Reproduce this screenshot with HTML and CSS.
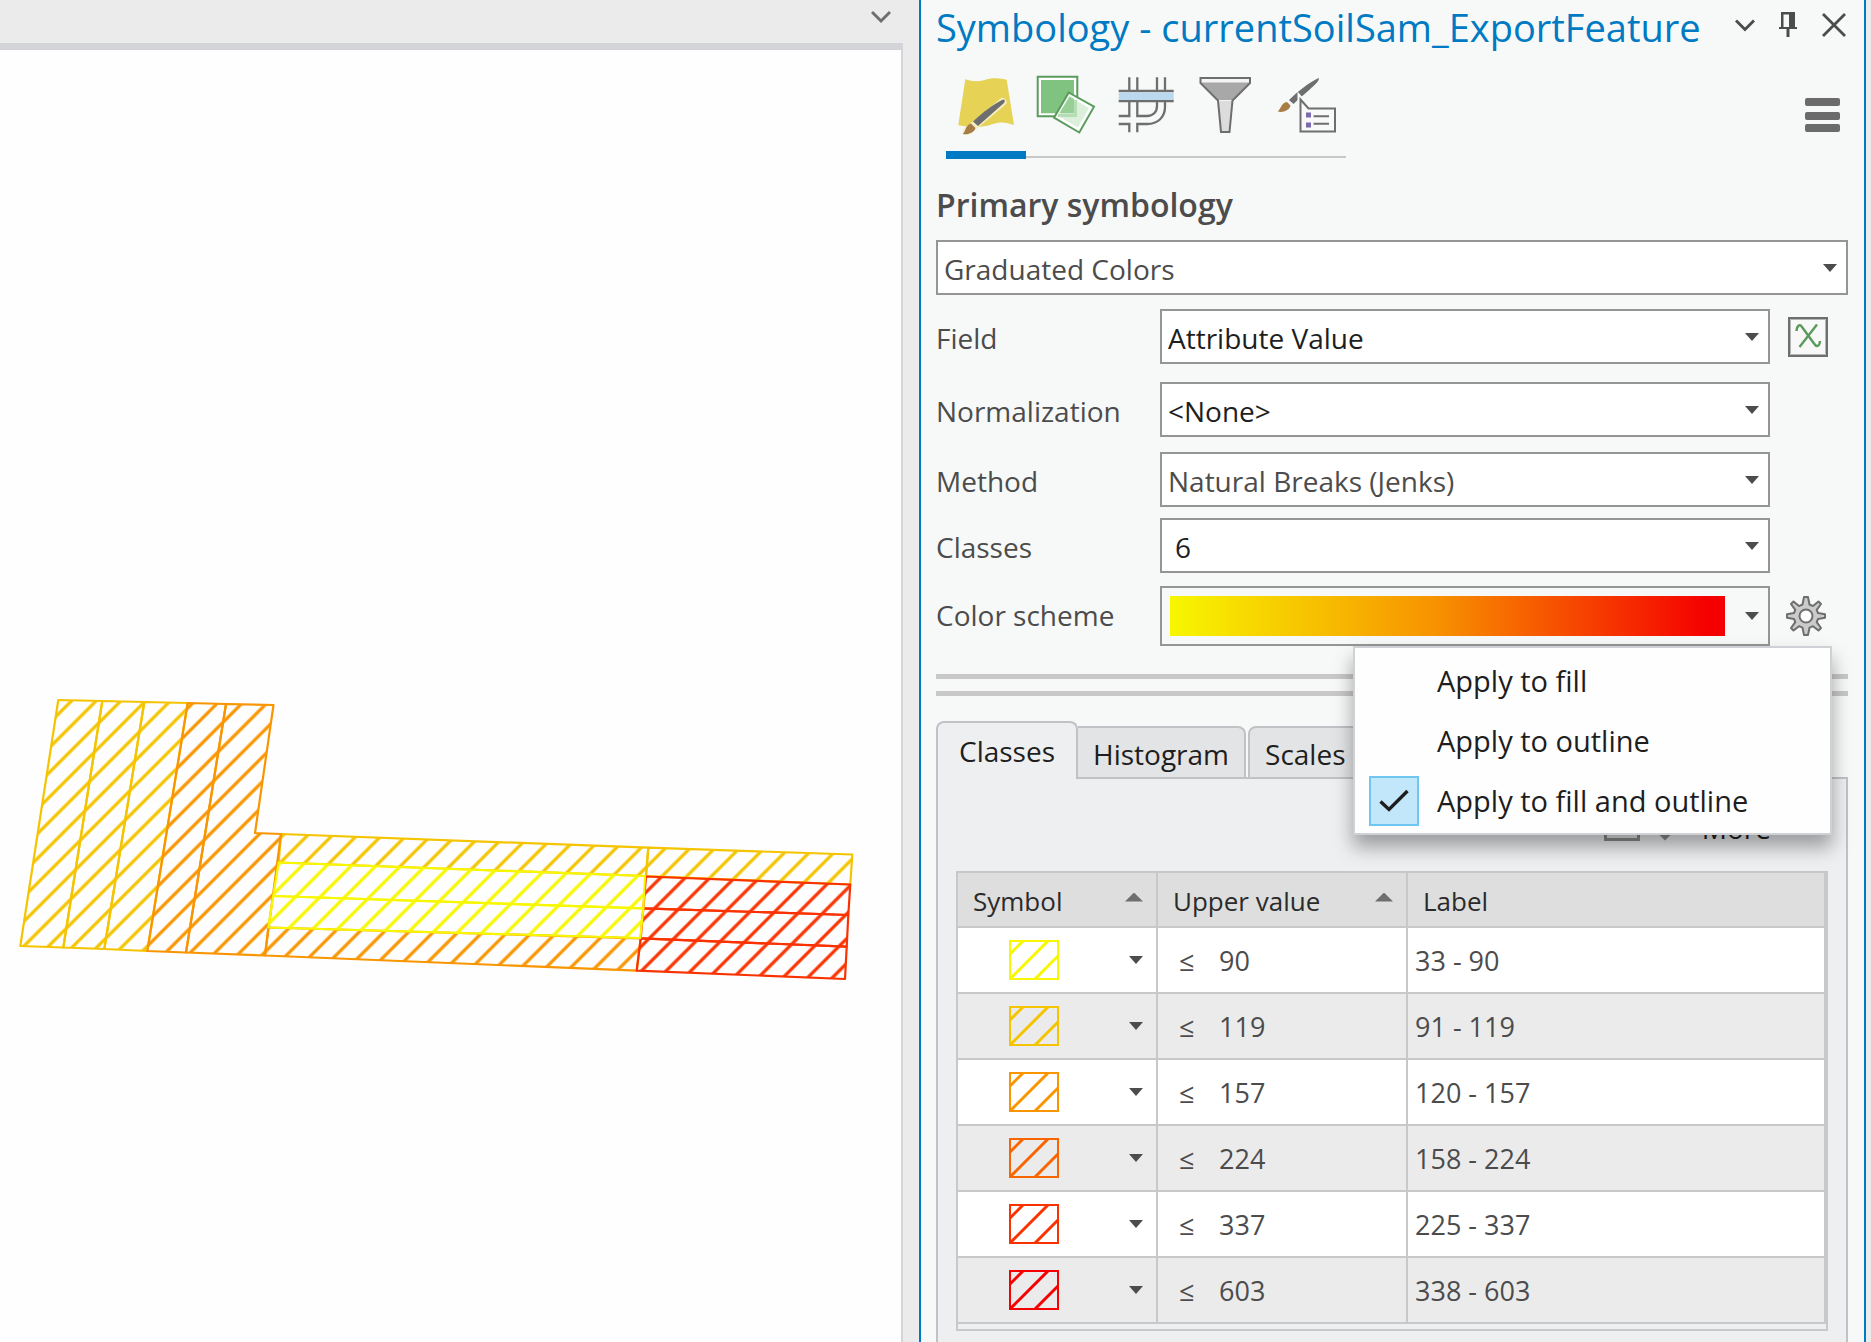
FILE: index.html
```html
<!DOCTYPE html>
<html lang="en">
<head>
<meta charset="utf-8">
<meta name="viewport" content="width=device-width, initial-scale=1">
<title>Symbology</title>
<link rel="stylesheet" href="styles.css">
</head>
<body>
<div class="app">
  <main class="view">
    <div class="view-bar">
      <button class="icon-button" type="button" aria-label="View options">
        <svg width="20" height="14" viewBox="0 0 20 14"><path d="M1 2l9 9 9-9" fill="none" stroke="#6e6e6e" stroke-width="3"/></svg>
      </button>
    </div>
    <div class="map">
      <svg class="map-drawing" viewBox="0 50 901 1292" role="img" aria-label="Field plots">
        <defs>
          <pattern id="hatch-gold" patternUnits="userSpaceOnUse" width="17.47" height="40" patternTransform="rotate(45) translate(537.4 0)"><path d="M8.73 0v40" stroke="#f5c400" stroke-width="3.2"/></pattern>
          <pattern id="hatch-orange" patternUnits="userSpaceOnUse" width="17.47" height="40" patternTransform="rotate(45) translate(537.4 0)"><path d="M8.73 0v40" stroke="#f99500" stroke-width="3.2"/></pattern>
          <pattern id="hatch-yellow" patternUnits="userSpaceOnUse" width="17.47" height="40" patternTransform="rotate(45) translate(537.4 0)"><path d="M8.73 0v40" stroke="#f7f700" stroke-width="3.2"/></pattern>
          <pattern id="hatch-red" patternUnits="userSpaceOnUse" width="17.47" height="40" patternTransform="rotate(45) translate(537.4 0)"><path d="M8.73 0v40" stroke="#fa3200" stroke-width="3.2"/></pattern>
        </defs>
        <g stroke-width="2.2" stroke-linejoin="round">
          <g fill="url(#hatch-gold)" stroke="#f5c400">
            <path d="M58.3 700L102.3 701 63.3 947.5 20.3 946z"/>
            <path d="M102.3 701L144.3 702 104.3 949 63.3 947.5z"/>
            <path d="M144.3 702L187.7 703 147.3 951 104.3 949z"/>
            <path d="M281 834L648.3 847.7 646 876 278.7 862.5z"/>
            <path d="M648.3 847.7L852.3 854.5 850.3 884.5 646 876z"/>
          </g>
          <g fill="url(#hatch-orange)" stroke="#f99500">
            <path d="M187.7 703L226 704 186 952.5 147.3 951z"/>
            <path d="M226 704L273.5 705 255 833 281 834 265 955.5 186 952.5z"/>
            <path d="M268.3 927.5L640.7 938.3 636.7 970.7 265 955.5z"/>
          </g>
          <g fill="url(#hatch-red)" stroke="#fa3200">
            <path d="M646 876.5L850.3 884.5 848.3 915 643.3 908.3z"/>
            <path d="M643.3 908.3L848.3 915 846.7 946.7 640.7 938.3z"/>
            <path d="M640.7 938.3L846.7 946.7 845 979 636.7 970.7z"/>
          </g>
          <g fill="url(#hatch-yellow)" stroke="#f7f700">
            <path d="M278.7 862.5L645 876 643.3 908.3 273.3 896z"/>
            <path d="M273.3 896L643.3 908.3 640.3 938 268.3 927.5z"/>
          </g>
        </g>
      </svg>
    </div>
  </main>

  <aside class="pane">
    <header class="pane-header">
      <h1 class="pane-title">Symbology - currentSoilSam_ExportFeature</h1>
      <div class="pane-actions">
        <button class="icon-button" type="button" aria-label="Pane options">
          <svg width="20" height="26" viewBox="0 0 20 26"><path d="M1 8.500l9 9 9-9" fill="none" stroke="#4c4c4c" stroke-width="3"/></svg>
        </button>
        <button class="icon-button" type="button" aria-label="Auto hide">
          <svg width="18" height="26" viewBox="0 0 18 26"><path d="M2 0h14v15h2v2h-7.500v8h-3v-8H0v-2h2zM4.500 2.500v12.500h5.500V2.500z" fill="#4c4c4c" fill-rule="evenodd"/></svg>
        </button>
        <button class="icon-button" type="button" aria-label="Close">
          <svg width="26" height="26" viewBox="0 0 26 26"><path d="M2 2l22 22M24 2L2 24" fill="none" stroke="#4c4c4c" stroke-width="2.800"/></svg>
        </button>
      </div>
    </header>

    <div class="toolbar">
      <nav class="modes" aria-label="Symbology modes">
        <button class="mode mode-active" type="button" aria-label="Primary symbology">
          <svg width="60" height="60" viewBox="0 0 60 60">
            <path d="M9.300 4.300C17 7 25 6.500 30 4.500 38 2 46 3.500 50.700 4.800L58 50C50 47 44 46.500 37 49 26 53 14 53 2.300 50z" fill="#e6d255"/>
            <path d="M46.500 27L19 50 11 56" fill="none" stroke="#f5eec0" stroke-width="8" stroke-linecap="round"/>
            <path d="M48 24.500C49 25.500 49 26.500 48 28L22 51 17 46.500C27 37 38 29 46 25z" fill="#6e6e6e"/>
            <path d="M15 48.500L19.500 53C18 58 12 60 6.500 59 10 57 9 50 15 48.500z" fill="#a87c46"/>
          </svg>
        </button>
        <button class="mode" type="button" aria-label="Vary symbology by attribute">
          <svg width="60" height="60" viewBox="0 0 60 60">
            <path d="M1.700 1.700h39.600v39.600H1.700z" fill="#fff" stroke="#5a9a5c" stroke-width="2"/>
            <path d="M5 5h33v33.300H5z" fill="#80c380"/>
            <path d="M32.700 17.500L58 31.700 43.300 57.500 18 42.700z" fill="#fff" fill-opacity=".9" stroke="#5a9a5c" stroke-width="2"/>
            <path d="M34 22L53 33 42 52.500 23 41.500z" fill="#dcefdb"/>
            <path d="M22 40.500L33.500 21.500 38 24V38.300H23z" fill="#97cf96"/>
            <path d="M39.500 25V40.500H22" fill="none" stroke="#b5deb4" stroke-width="3"/>
          </svg>
        </button>
        <button class="mode" type="button" aria-label="Symbol layer drawing">
          <svg width="60" height="60" viewBox="0 0 60 60" fill="none" stroke="#6e6e6e" stroke-width="2.300">
            <path d="M13.300 2.300V16M21.300 2.300V16M41 2.300V16M49 2.300V16M13.300 26V41H2.700M13.300 57.300V49H2.700M21.300 57.300V49H31C42 49 49 42 49 32V26M21.300 26V41H31C37 41 41 37 41 31V26M2.700 16H57.700M2.700 26H57.700"/>
            <path d="M2.700 21.300h55" stroke="#bbd9ee" stroke-width="7.600"/>
          </svg>
        </button>
        <button class="mode" type="button" aria-label="Display filters">
          <svg width="60" height="60" viewBox="0 0 60 60">
            <path d="M4.500 3H54V8L36.500 25.500 33.500 57H25L22 25.500 4.500 8z" fill="#f4f4f4"/>
            <path d="M5 7.500H53.500L36 25H22.500z" fill="#a8a8a8"/>
            <path d="M22.500 26H36L33.300 57H25.300z" fill="#dcdcdc"/>
            <path d="M4.500 3H54V8L36.500 25.500 33.500 57H25L22 25.500 4.500 8z" fill="none" stroke="#6e6e6e" stroke-width="2"/>
          </svg>
        </button>
        <button class="mode" type="button" aria-label="Advanced symbology options">
          <svg width="60" height="60" viewBox="0 0 60 60">
            <path d="M42.500 3C43.500 4 42.500 5.500 41 7.500 35 14 25 22 17.500 29L13 25C21 17 33 7.500 42.500 3z" fill="#6e6e6e"/>
            <path d="M11 27L14.500 30.500C14 35 7 38 1.700 36.500 5 34 5 28 11 27z" fill="#a87c46"/>
            <path d="M24.500 24.500L32.500 33.500H59V56.500H24.500z" fill="#f9f9fa" stroke="#f7f9f9" stroke-width="6"/>
            <path d="M24.500 24.500L32.500 33.500H59V56.500H24.500z" fill="#f9f9fa" stroke="#6e6e6e" stroke-width="2"/>
            <path d="M30 37.500h5v5h-5zM30 47.500h5v5h-5z" fill="#7b68ae"/>
            <path d="M37.500 41.300h15.500M37.500 48.700h15.500" stroke="#6e6e6e" stroke-width="2"/>
          </svg>
        </button>
      </nav>
      <button class="icon-button menu-button" type="button" aria-label="Menu">
        <svg width="35" height="34" viewBox="0 0 35 34" fill="#6b6b6b"><rect width="35" height="8" rx="2"/><rect y="14" width="35" height="8" rx="2"/><rect y="26" width="35" height="8" rx="2"/></svg>
      </button>
    </div>

    <h2 class="section-title"><label for="symbology-type">Primary symbology</label></h2>
    <div class="select select-muted">
      <select id="symbology-type"><option>Graduated Colors</option></select>
    </div>

    <div class="fields">
      <label for="field">Field</label>
      <div class="select"><select id="field"><option>Attribute Value</option></select></div>
      <button class="icon-button row-button" type="button" aria-label="Set an expression">
        <svg width="40" height="40" viewBox="0 0 40 40">
          <path d="M1 1h38v38H1z" fill="#f9f8f9" stroke="#6e6e6e" stroke-width="2"/><path d="M2.500 2.500h35v35h-35z" fill="none" stroke="#b5b5b5"/>
          <path d="M8.500 14C9 8 12 7 14 10L26 26.500C29 31 31.500 29 32 24M29 7.500L11.500 30" fill="none" stroke="#5a9a5c" stroke-width="2.400"/>
        </svg>
      </button>

      <label for="normalization">Normalization</label>
      <div class="select"><select id="normalization"><option>&lt;None&gt;</option></select></div>
      <span></span>

      <label for="method">Method</label>
      <div class="select select-muted"><select id="method"><option>Natural Breaks (Jenks)</option></select></div>
      <span></span>

      <label for="classes">Classes</label>
      <div class="select select-inset"><select id="classes"><option>6</option></select></div>
      <span></span>

      <label for="scheme">Color scheme</label>
      <div class="select select-ramp"><button id="scheme" class="ramp-button" type="button" aria-haspopup="listbox"><span class="ramp"></span></button></div>
      <div class="scheme-options">
        <button class="icon-button row-button" type="button" aria-label="Color scheme options" aria-haspopup="menu" aria-expanded="true">
          <svg width="40" height="40" viewBox="0 0 40 40">
            <g stroke="#6e6e6e" stroke-width="2" stroke-linejoin="round" fill="#cbcbcb">
              <path d="M18 1h4l1.500 7.500 3.500 1.600L32.500 5.500 35 8l-4.300 5.800 1.300 3.200L39 18.300v3.400L32 23l-1.300 3.200L35 32l-2.500 2.500L27 30.200l-3.500 1.500L22 39h-4l-1.500-7.300L13 30.200 7.500 34.500 5 32l4.300-5.800L8 23l-7-1.300v-3.400L8 17l1.300-3.200L5 8l2.500-2.500L13 10.100l3.500-1.600z"/>
              <circle cx="20" cy="20" r="6.500" fill="#fff"/>
            </g>
          </svg>
        </button>
        <div class="menu" role="menu">
          <button class="menu-item" type="button" role="menuitemradio" aria-checked="false"><span class="mark"></span>Apply to fill</button>
          <button class="menu-item" type="button" role="menuitemradio" aria-checked="false"><span class="mark"></span>Apply to outline</button>
          <button class="menu-item" type="button" role="menuitemradio" aria-checked="true"><span class="mark mark-on"><svg width="30" height="24" viewBox="0 0 30 24"><path d="M1.500 12.500l8.500 8L28.500 2" fill="none" stroke="#1e1e1e" stroke-width="3.400"/></svg></span>Apply to fill and outline</button>
        </div>
      </div>
    </div>

    <div class="splitter"></div>

    <div class="tabs" role="tablist">
      <button class="tab tab-active" type="button" role="tab" aria-selected="true">Classes</button>
      <button class="tab" type="button" role="tab" aria-selected="false">Histogram</button>
      <button class="tab" type="button" role="tab" aria-selected="false">Scales</button>
    </div>
    <section class="tab-panel" role="tabpanel">
      <div class="panel-tools">
        <button class="more" type="button">
          <svg width="36" height="26" viewBox="0 0 36 26"><path d="M1.500 1.500h33v23h-33z" fill="#e4e5e6" stroke="#8c8c8c" stroke-width="3"/></svg>
          <svg width="14" height="26" viewBox="0 0 14 26"><path d="M1 18l6 6 6-6" fill="#8c8c8c" stroke="#8c8c8c" stroke-width="2"/></svg>
          <span>More</span>
        </button>
      </div>
      <div class="table-box">
        <table class="classes">
          <colgroup><col class="col-symbol"><col class="col-upper"><col></colgroup>
          <thead>
            <tr><th scope="col"><span class="head sorted">Symbol</span></th><th scope="col"><span class="head sorted">Upper value</span></th><th scope="col"><span class="head">Label</span></th></tr>
          </thead>
          <tbody>
            <tr class="c1"><td><div class="symbol"><svg class="swatch" viewBox="0 0 50 40"><use href="#swatch"/></svg></div></td><td><span class="le">≤</span>90</td><td>33 - 90</td></tr>
            <tr class="c2"><td><div class="symbol"><svg class="swatch" viewBox="0 0 50 40"><use href="#swatch"/></svg></div></td><td><span class="le">≤</span>119</td><td>91 - 119</td></tr>
            <tr class="c3"><td><div class="symbol"><svg class="swatch" viewBox="0 0 50 40"><use href="#swatch"/></svg></div></td><td><span class="le">≤</span>157</td><td>120 - 157</td></tr>
            <tr class="c4"><td><div class="symbol"><svg class="swatch" viewBox="0 0 50 40"><use href="#swatch"/></svg></div></td><td><span class="le">≤</span>224</td><td>158 - 224</td></tr>
            <tr class="c5"><td><div class="symbol"><svg class="swatch" viewBox="0 0 50 40"><use href="#swatch"/></svg></div></td><td><span class="le">≤</span>337</td><td>225 - 337</td></tr>
            <tr class="c6"><td><div class="symbol"><svg class="swatch" viewBox="0 0 50 40"><use href="#swatch"/></svg></div></td><td><span class="le">≤</span>603</td><td>338 - 603</td></tr>
          </tbody>
        </table>
      </div>
    </section>
  </aside>
</div>
<svg class="defs" width="0" height="0" aria-hidden="true">
  <symbol id="swatch" viewBox="0 0 50 40">
    <path d="M1 1h48v38H1z" fill="none" stroke="currentColor" stroke-width="2"/>
    <path d="M1 14L14 1M2 38L39 1M26 39L49 16" fill="none" stroke="currentColor" stroke-width="3"/>
  </symbol>
</svg>
</body>
</html>
```

FILE: styles.css
```css
* { box-sizing: border-box; }

body {
  margin: 0;
  background: #ebebeb;
  color: #4c4c4c;
  font: 28px/40px "Open Sans", "Noto Sans", sans-serif;
}

button, select { font: inherit; color: inherit; }
button { margin: 0; padding: 0; border: 0; background: none; }
svg { display: block; flex: none; }

.app {
  display: grid;
  grid-template-columns: minmax(0, 919fr) minmax(0, 952fr);
  min-height: 100vh;
}

/* Map view */
.view { display: flex; flex-direction: column; padding-right: 16px; }
.view-bar {
  display: flex;
  justify-content: flex-end;
  height: 50px;
  padding: 10px 12px 0 0;
  border-bottom: 7px solid #d2d4d8;
}
.icon-button { display: flex; align-items: flex-start; flex: none; }
.map { flex: 1; background: #fefefe; border-right: 2px solid #d4d5da; }
.map-drawing { width: 100%; height: auto; }

/* Symbology pane */
.pane {
  display: flex;
  flex-direction: column;
  margin-right: 5px;
  padding: 0 16px 0 15px;
  background: #f7f9f9;
  border: solid #007ac2;
  border-width: 0 2px;
}
.pane-header { display: flex; justify-content: space-between; height: 68px; }
.pane-title {
  margin: 0;
  color: #007ac2;
  font-size: 38px;
  font-weight: 400;
  line-height: 54px;
  white-space: nowrap;
}
.pane-actions { display: flex; gap: 24px; padding: 12px 1px 0 0; }

.toolbar { display: flex; justify-content: space-between; padding: 0 8px 0 10px; }
.modes { display: flex; border-bottom: 2px solid #c8c8c8; }
.mode { display: flex; align-items: flex-start; width: 80px; height: 88px; padding: 7px 10px; }
.mode-active { margin-bottom: -3px; border-bottom: 8px solid #007ac2; height: 91px; }
.menu-button { padding-top: 30px; }

.section-title { margin: 26px 0 14px; font-size: 32px; font-weight: 600; line-height: 42px; }

.select { position: relative; height: 55px; background: #fff; border: 2px solid #959595; color: #1e1e1e; }
.select select {
  appearance: none;
  width: 100%;
  height: 51px;
  padding: 2px 40px 0 6px;
  border: 0;
  background: none;
}
.select::after {
  content: "";
  position: absolute;
  right: 9px;
  top: 22px;
  width: 14px;
  height: 8px;
  background: #4c4c4c;
  clip-path: polygon(0 0, 100% 0, 50% 100%);
  pointer-events: none;
}
.select-muted { color: #4c4c4c; }
.select-inset select { padding-left: 13px; }
.select-ramp { height: 60px; background: none; }
.select-ramp::after { top: 24px; }
.ramp-button { display: block; width: 100%; height: 56px; padding: 8px 43px 8px 8px; }
.ramp { display: block; height: 40px; background: linear-gradient(90deg, #f7f700, #f79400 47%, #f50000 97%); }

.fields {
  display: grid;
  grid-template-columns: 224px 1fr 78px;
  grid-template-rows: 73px 70px 66px 68px 60px;
  margin-top: 14px;
}
.fields > label { padding-top: 9px; }
.row-button { padding: 8px 0 0 18px; }

.scheme-options { position: relative; }
.scheme-options .row-button { padding: 10px 0 0 16px; }
.menu {
  position: absolute;
  z-index: 2;
  top: 60px;
  right: 16px;
  width: 479px;
  padding: 3px 0 2px;
  background: #fefefe;
  border: 2px solid #d0d1d6;
  box-shadow: 0 12px 18px rgba(0, 0, 0, .35);
  color: #1e1e1e;
  font-size: 29px;
}
.menu-item { display: flex; align-items: center; gap: 18px; width: 100%; height: 60px; padding-left: 14px; white-space: nowrap; }
.mark { width: 50px; height: 50px; }
.mark-on { display: flex; align-items: center; justify-content: center; background: #c2e7fa; border: 2px solid #6fc6f1; }

.splitter { height: 22px; margin: 28px 0 25px; border: solid #c8c8c8; border-width: 5px 0; }

/* Tabs */
.tabs { display: flex; align-items: flex-end; position: relative; margin-bottom: -2px; color: #1e1e1e; }
.tab { height: 53px; padding: 2px 15px 0; background: #e3e4e5; border: 2px solid #c0c2c5; border-radius: 8px 8px 0 0; }
.tab + .tab + .tab { margin-left: 2px; }
.tab-active { height: 58px; padding: 0 21px; background: #eeeff1; border-bottom: 0; }
.tab-active + .tab { border-left: 0; border-top-left-radius: 0; }
.tab-panel { flex: 1; padding: 0 18px 11px; background: #eeeff1; border: solid #c0c2c5; border-width: 2px 2px 1px; }

.panel-tools { display: flex; justify-content: flex-end; height: 92px; padding: 29px 57px 0 0; }
.more { display: flex; align-items: center; gap: 18px; height: 40px; color: #1e1e1e; }
.more svg + svg + span { margin-left: 12px; }

.table-box { border: 2px solid #c8c8c8; padding-bottom: 5px; background: #eeeff1; }
.classes { width: 100%; border-collapse: separate; border-spacing: 0; table-layout: fixed; font-size: 27px; }
.col-symbol { width: 200px; }
.col-upper { width: 250px; }
.classes th, .classes td { padding: 0; border: solid #c8c8c8; border-width: 0 2px 2px 0; text-align: left; }
.classes th { height: 55px; background: #dedede; color: #2b2b2b; font-size: 26px; font-weight: 400; }
.classes td { height: 66px; background: #fff; padding-left: 7px; padding-top: 2px; }
.classes tr:nth-child(even) td { background: #ebebeb; }
.head { display: flex; align-items: center; justify-content: space-between; padding: 3px 13px 0 15px; }
.sorted::after { content: ""; width: 18px; height: 9px; margin-bottom: 8px; background: #6e6e6e; clip-path: polygon(50% 0, 100% 100%, 0 100%); }
.classes td:first-child { padding: 0; }
.symbol { display: flex; align-items: center; justify-content: space-between; padding: 0 13px 0 51px; }
.symbol::after { content: ""; width: 14px; height: 8px; background: #4c4c4c; clip-path: polygon(0 0, 100% 0, 50% 100%); }
.swatch { width: 50px; height: 40px; }
.le { display: inline-block; width: 40px; margin-left: 14px; }

.c1 .swatch { color: #f7f700; }
.c2 .swatch { color: #f5c400; }
.c3 .swatch { color: #f99500; }
.c4 .swatch { color: #f96500; }
.c5 .swatch { color: #fa3200; }
.c6 .swatch { color: #f70000; }
.defs { position: absolute; }
```
